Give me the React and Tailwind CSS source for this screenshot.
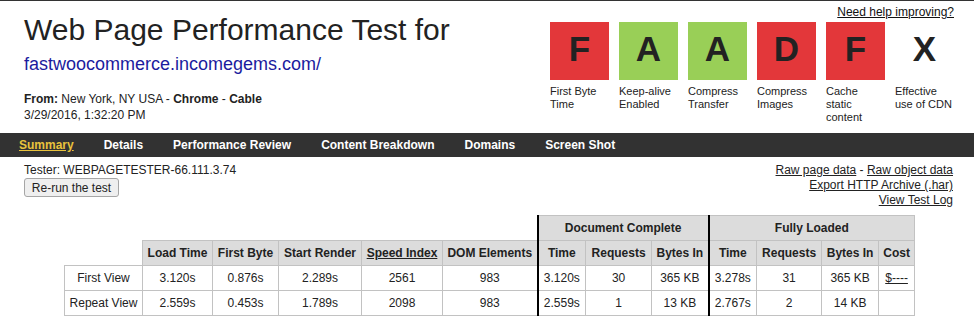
const grades = [
	{ letter: "F", label: "First Byte Time", bg: "bg-[#e3373a]" },
	{ letter: "A", label: "Keep-alive Enabled", bg: "bg-[#99cf57]" },
	{ letter: "A", label: "Compress Transfer", bg: "bg-[#99cf57]" },
	{ letter: "D", label: "Compress Images", bg: "bg-[#e3373a]" },
	{ letter: "F", label: "Cache static content", bg: "bg-[#e3373a]" },
	{ letter: "X", label: "Effective use of CDN", bg: "bg-white" },
];

const navItems = ["Summary", "Details", "Performance Review", "Content Breakdown", "Domains", "Screen Shot"];

const rows = [
	["First View", "3.120s", "0.876s", "2.289s", "2561", "983", "3.120s", "30", "365 KB", "3.278s", "31", "365 KB", "$----"],
	["Repeat View", "2.559s", "0.453s", "1.789s", "2098", "983", "2.559s", "1", "13 KB", "2.767s", "2", "14 KB", ""],
];

const colWidths = ["w-[78px]", "w-[70px]", "w-[66px]", "w-[83px]", "w-[81px]", "w-[95px]", "w-[48px]", "w-[66px]", "w-[57px]", "w-[48px]", "w-[65px]", "w-[57px]", "w-[36px]"];

const heads = ["", "Load Time", "First Byte", "Start Render", "Speed Index", "DOM Elements", "Time", "Requests", "Bytes In", "Time", "Requests", "Bytes In", "Cost"];

const App = () => {
	const thick = (i) => (i === 6 || i === 9 ? "border-l-2 border-l-black" : "");
	return (
		<div className="w-[974px] h-[331px] overflow-hidden bg-white text-[#222] font-['Liberation_Sans',Arial,sans-serif]">
			<div className="border-t border-[#333] flex justify-between h-[133px]">
				<div className="pl-[24px] pt-[12px]">
					<h1 className="text-[30px] leading-[34px] text-[#222]">Web Page Performance Test for</h1>
					<a className="block mt-[6px] text-[18px] leading-[22px] text-[#1b1b9e]">fastwoocommerce.incomegems.com/</a>
					<div className="mt-[16px] text-xs leading-4">
						<div>
							<span className="font-bold">From:</span> New York, NY USA - <span className="font-bold">Chrome</span> -{" "}
							<span className="font-bold">Cable</span>
						</div>
						<div>3/29/2016, 1:32:20 PM</div>
					</div>
				</div>
				<div className="pr-[20px] pt-[3px]">
					<div className="text-right text-xs leading-4 underline text-[#111]">Need help improving?</div>
					<div className="flex gap-[10px] mt-[2px]">
						{grades.map((g, i) => (
							<div key={i} className="w-[59px]">
								<div className={`h-[58px] flex items-center justify-center pb-[4px] text-[35px] font-bold text-[#222] ${g.bg}`}>
									{g.letter}
								</div>
								<div className="mt-[5px] text-[11px] leading-[13px] text-[#222]">{g.label}</div>
							</div>
						))}
					</div>
				</div>
			</div>

			<div className="h-[24px] bg-[#323232] flex items-center pl-[19px] gap-[30px] text-xs font-bold text-white">
				{navItems.map((n, i) => (
					<span key={n} className={i === 0 ? "text-[#e9c23c] underline" : ""}>
						{n}
					</span>
				))}
			</div>

			<div className="flex justify-between items-start pl-[24px] pr-[21px] mt-[6px] text-xs">
				<div>
					<div className="leading-[15px]">Tester: WEBPAGETESTER-66.111.3.74</div>
					<button className="w-[95px] h-[19px] border border-[#a6a6a6] rounded-[3px] bg-[#efefef] text-xs leading-none text-[#222]">
						Re-run the test
					</button>
				</div>
				<div className="text-right leading-[15px]">
					<div>
						<span className="underline">Raw page data</span> - <span className="underline">Raw object data</span>
					</div>
					<div className="underline">Export HTTP Archive (.har)</div>
					<div className="underline">View Test Log</div>
				</div>
			</div>

			<table className="ml-[64px] mt-[7px] table-fixed border-collapse w-[850px] text-xs text-[#222] text-center">
				<colgroup>
					{colWidths.map((w, i) => (
						<col key={i} className={w} />
					))}
				</colgroup>
				<thead>
					<tr className="h-[25px]">
						<th colSpan={6} className="p-0"></th>
						<th colSpan={3} className="p-0 border border-[#c2c2c2] border-l-2 border-l-black bg-[#dcdcdc] font-bold">
							Document Complete
						</th>
						<th colSpan={4} className="p-0 border border-[#c2c2c2] border-l-2 border-l-black bg-[#dcdcdc] font-bold">
							Fully Loaded
						</th>
					</tr>
					<tr className="h-[25px]">
						{heads.map((h, i) =>
							i === 0 ? (
								<th key={i} className="p-0"></th>
							) : (
								<th key={i} className={`p-0 border border-[#c2c2c2] bg-[#dcdcdc] font-bold whitespace-nowrap ${thick(i)}`}>
									{h === "Speed Index" ? <span className="underline">{h}</span> : h}
								</th>
							)
						)}
					</tr>
				</thead>
				<tbody>
					{rows.map((r, ri) => (
						<tr key={ri} className="h-[25px]">
							{r.map((c, i) => (
								<td key={i} className={`p-0 border border-[#c2c2c2] whitespace-nowrap ${thick(i)}`}>
									{c === "$----" ? <span className="underline">{c}</span> : c}
								</td>
							))}
						</tr>
					))}
				</tbody>
			</table>
		</div>
	);
};

export default App;
